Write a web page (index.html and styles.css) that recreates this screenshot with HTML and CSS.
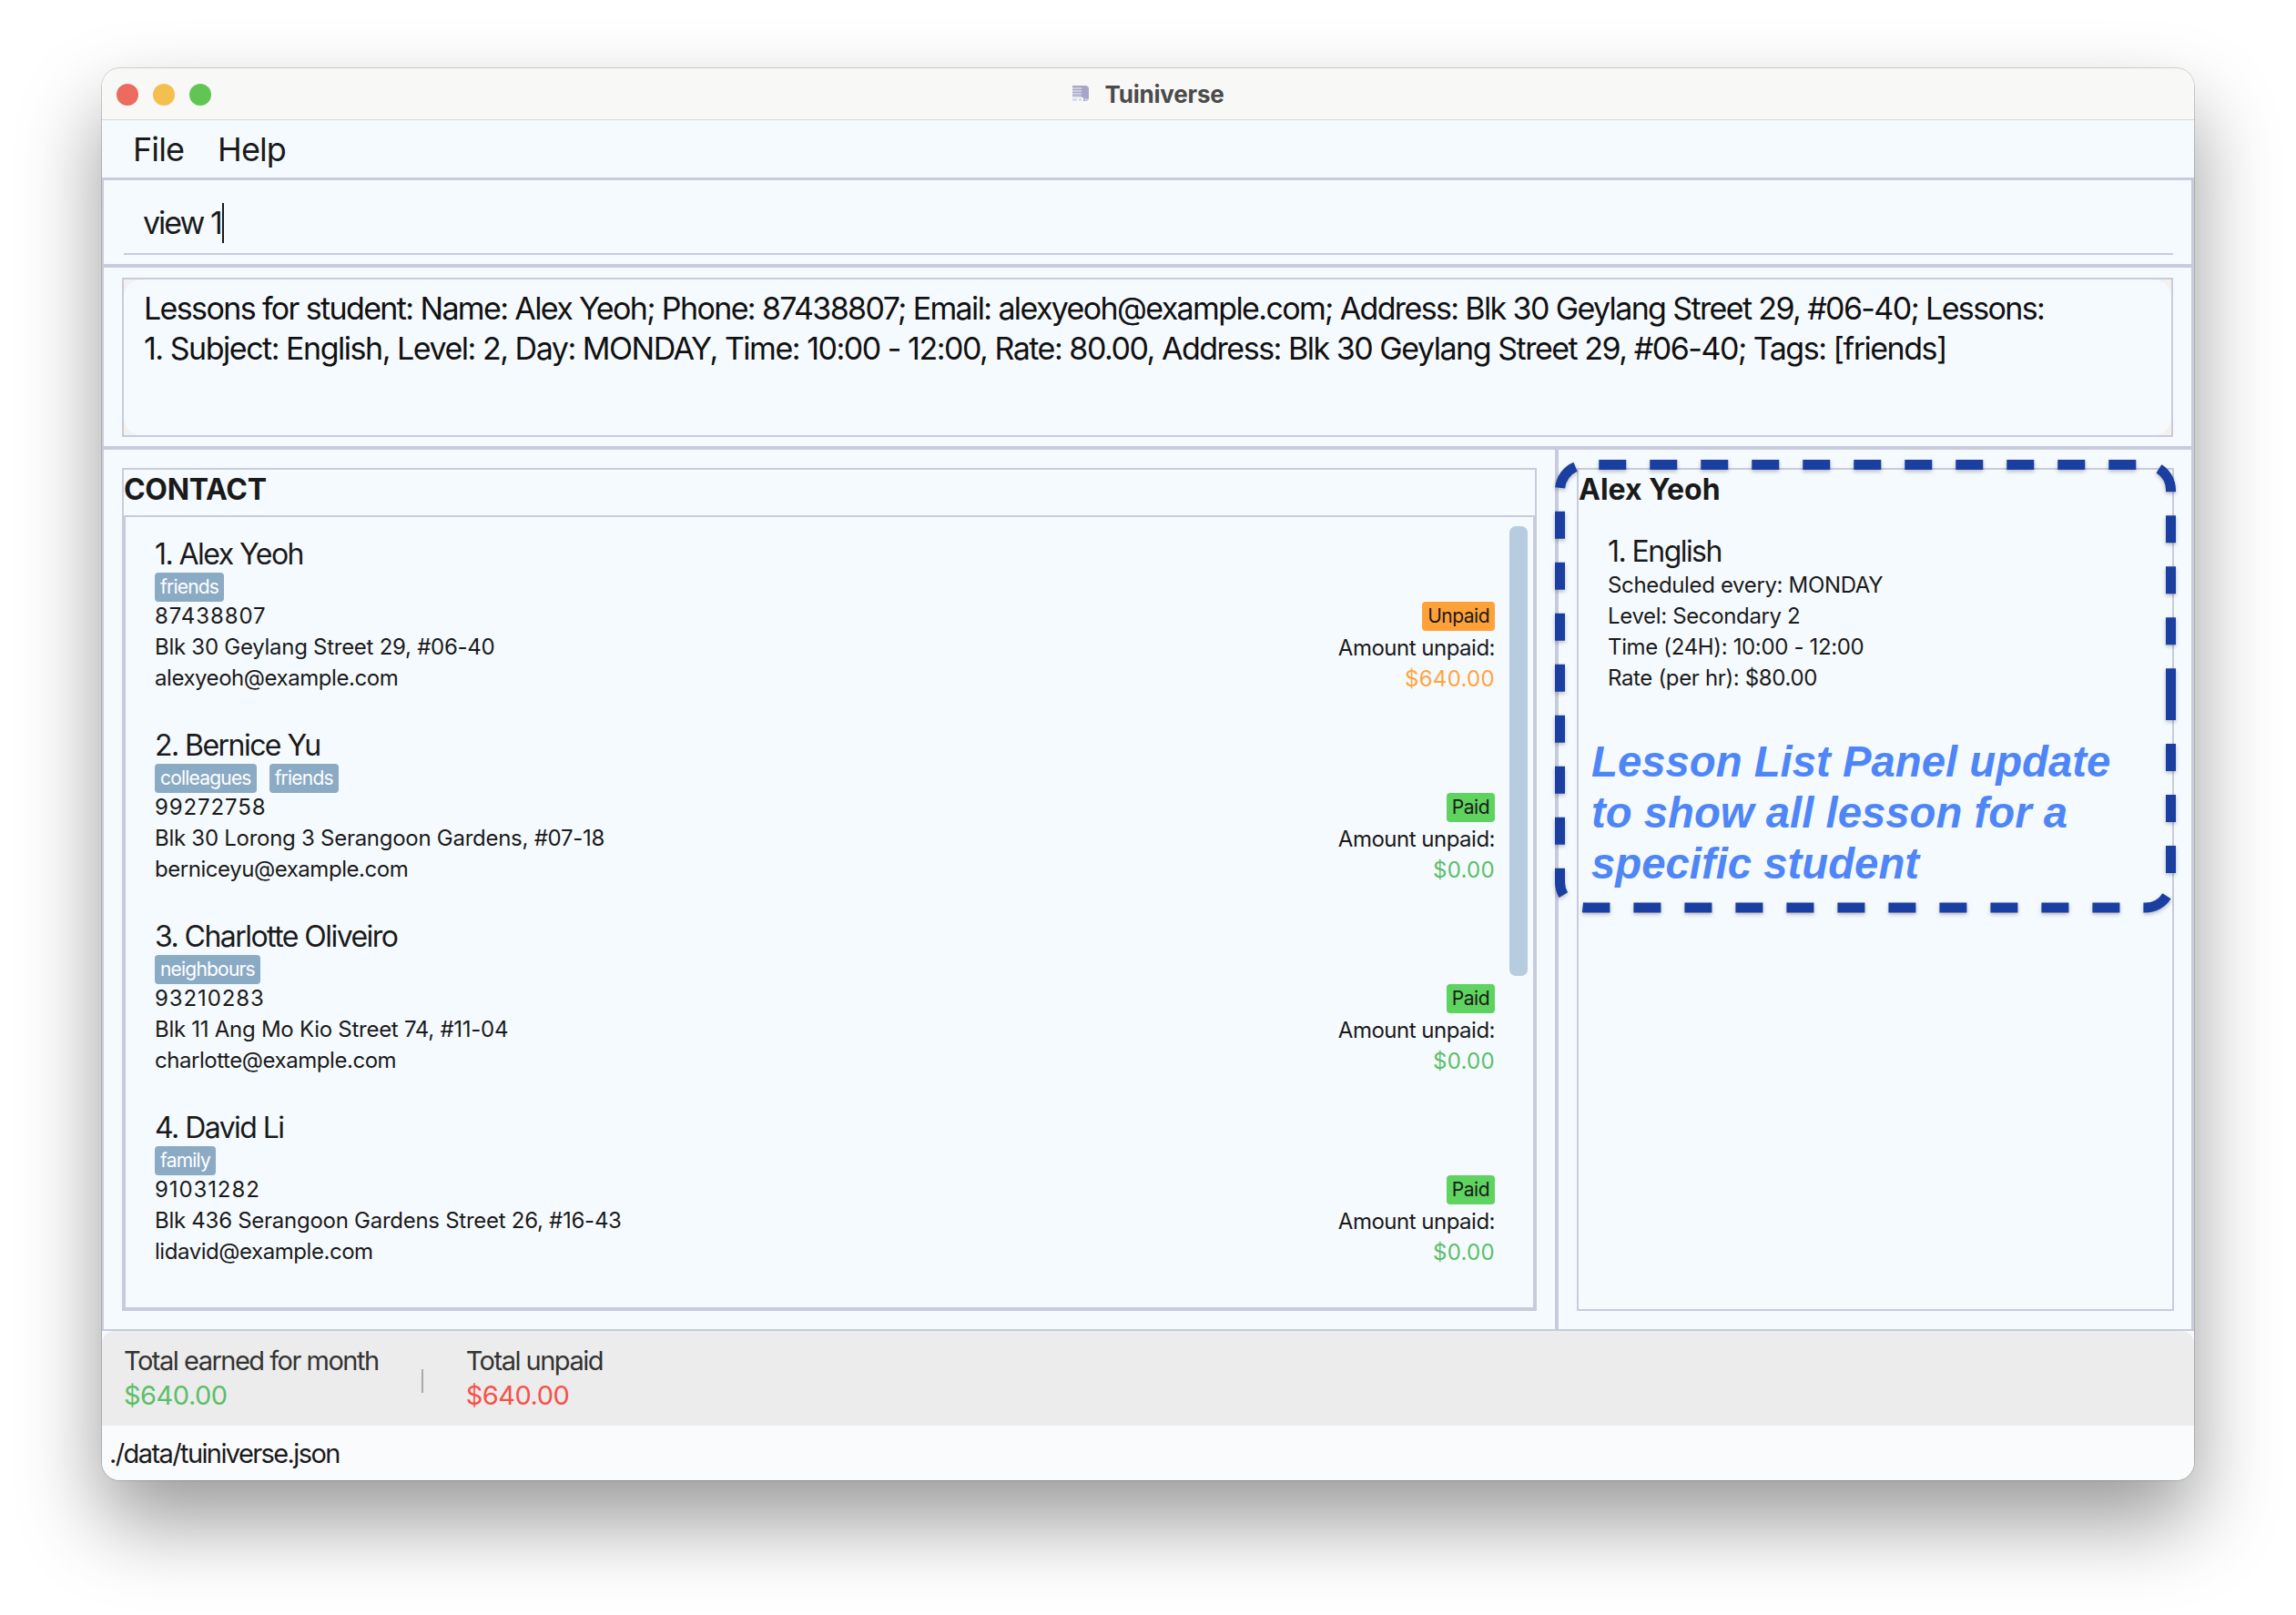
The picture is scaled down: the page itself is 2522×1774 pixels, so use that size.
FILE: index.html
```html
<!DOCTYPE html>
<html lang="en">
<head>
    <meta charset="UTF-8">
    <title>Tuiniverse</title>
    <link rel="stylesheet" href="styles.css">
</head>
<body>

<div class="window">
    <div class="titlebar">
        <div class="lights">
            <span class="light red"></span>
            <span class="light amber"></span>
            <span class="light green"></span>
        </div>
        <svg class="app-icon" width="20" height="20" viewBox="0 0 20 20">
            <path d="M1 1h14a4 4 0 0 1 4 4v9a4 4 0 0 1-4 4h-2v-4H1z" fill="#a8a6c8"/>
            <path d="M1 4h10M1 7h10M1 10h10M1 13h10" stroke="#f4f4f8" stroke-width="1"/>
            <path d="M1 16.5h5M8 16.5h3M14 16.5h4" stroke="#c3d0f2" stroke-width="2"/>
        </svg>
        <span class="app-name">Tuiniverse</span>
    </div>

    <div class="menubar">
        <span class="menu-item">File</span>
        <span class="menu-item">Help</span>
    </div>

    <div class="app-body">
        <div class="command">
            <div class="command-input"><span>view 1</span><span class="caret"></span></div>
        </div>

        <div class="result">
            <div class="result-box">
                <div class="result-text">
                    <p class="result-first">Lessons for student: Name: Alex Yeoh; Phone: 87438807; Email: alexyeoh@example.com; Address: Blk 30 Geylang Street 29, #06-40; Lessons:</p>
                    <p>1. Subject: English, Level: 2, Day: MONDAY, Time: 10:00 - 12:00, Rate: 80.00, Address: Blk 30 Geylang Street 29, #06-40; Tags: [friends]</p>
                </div>
            </div>
        </div>

        <div class="main">
            <div class="contacts-col">
                <div class="contacts">
                    <div class="panel-title">CONTACT</div>
                    <div class="list">
                        <div class="scrollbar"></div>

                        <div class="card">
                            <div class="card-left">
                                <div class="name">1. Alex Yeoh</div>
                                <div class="tags"><span class="tag">friends</span></div>
                                <div class="line phone">87438807</div>
                                <div class="line address">Blk 30 Geylang Street 29, #06-40</div>
                                <div class="line email">alexyeoh@example.com</div>
                            </div>
                            <div class="card-right">
                                <span class="badge unpaid">Unpaid</span>
                                <div class="amount-label">Amount unpaid:</div>
                                <div class="amount orange">$640.00</div>
                            </div>
                        </div>

                        <div class="card">
                            <div class="card-left">
                                <div class="name">2. Bernice Yu</div>
                                <div class="tags"><span class="tag">colleagues</span><span class="tag">friends</span></div>
                                <div class="line phone">99272758</div>
                                <div class="line address">Blk 30 Lorong 3 Serangoon Gardens, #07-18</div>
                                <div class="line email">berniceyu@example.com</div>
                            </div>
                            <div class="card-right">
                                <span class="badge paid">Paid</span>
                                <div class="amount-label">Amount unpaid:</div>
                                <div class="amount lime">$0.00</div>
                            </div>
                        </div>

                        <div class="card">
                            <div class="card-left">
                                <div class="name">3. Charlotte Oliveiro</div>
                                <div class="tags"><span class="tag">neighbours</span></div>
                                <div class="line phone">93210283</div>
                                <div class="line address">Blk 11 Ang Mo Kio Street 74, #11-04</div>
                                <div class="line email">charlotte@example.com</div>
                            </div>
                            <div class="card-right">
                                <span class="badge paid">Paid</span>
                                <div class="amount-label">Amount unpaid:</div>
                                <div class="amount lime">$0.00</div>
                            </div>
                        </div>

                        <div class="card">
                            <div class="card-left">
                                <div class="name">4. David Li</div>
                                <div class="tags"><span class="tag">family</span></div>
                                <div class="line phone">91031282</div>
                                <div class="line address">Blk 436 Serangoon Gardens Street 26, #16-43</div>
                                <div class="line email">lidavid@example.com</div>
                            </div>
                            <div class="card-right">
                                <span class="badge paid">Paid</span>
                                <div class="amount-label">Amount unpaid:</div>
                                <div class="amount lime">$0.00</div>
                            </div>
                        </div>
                    </div>
                </div>
            </div>

            <div class="lessons-col">
                <div class="lessons">
                    <div class="panel-title">Alex Yeoh</div>
                    <div class="lesson">
                        <div class="name">1. English</div>
                        <div class="line">Scheduled every: MONDAY</div>
                        <div class="line">Level: Secondary 2</div>
                        <div class="line">Time (24H): 10:00 - 12:00</div>
                        <div class="line">Rate (per hr): $80.00</div>
                    </div>
                    <div class="note">Lesson List Panel update<br>to show all lesson for a<br>specific student</div>
                </div>
            </div>
        </div>
    </div>

    <div class="status">
        <div class="stat">
            <div class="stat-label">Total earned for month</div>
            <div class="stat-value earned">$640.00</div>
        </div>
        <div class="stat-sep"></div>
        <div class="stat">
            <div class="stat-label">Total unpaid</div>
            <div class="stat-value owing">$640.00</div>
        </div>
    </div>

    <div class="footer">./data/tuiniverse.json</div>
</div>

<!-- annotation drawn over the screenshot -->
<svg class="dashes" width="2522" height="1774" viewBox="0 0 2522 1774">
    <path d="M2384.5 761V969A28 28 0 0 1 2356.5 997H1741.5A28 28 0 0 1 1713.5 969V538.5A28 28 0 0 1 1741.5 510.5H2356.5A28 28 0 0 1 2384.5 538.5V761Z"
          fill="none" stroke="#1a3fa0" stroke-width="11" stroke-dasharray="30 26"/>
</svg>

</body>
</html>
```

FILE: styles.css
```css
* {
    box-sizing: border-box;
}
body {
    margin: 0;
    padding: 75px 112px 0;
    height: 1774px;
    overflow: hidden;
    background-color: #fff;
    font-family: Inter, "Noto Sans", sans-serif;
    color: #1a1a1a;
    position: relative;
}
p {
    margin: 0;
}
.window {
    width: 2298px;
    height: 1551px;
    display: flex;
    flex-direction: column;
    border-radius: 20px;
    overflow: hidden;
    background-color: #f5faff;
    box-shadow: 0 0 0 1px rgba(0, 0, 0, 0.16), 0 45px 90px rgba(0, 0, 0, 0.4);
}

/* title bar */
.titlebar {
    height: 57px;
    flex: none;
    display: flex;
    align-items: center;
    justify-content: center;
    position: relative;
    background-color: #f8f8f6;
    border-bottom: 1px solid #d8d8d8;
}
.lights {
    position: absolute;
    left: 16px;
    top: 17px;
    display: flex;
    gap: 16px;
}
.light {
    width: 24px;
    height: 24px;
    border-radius: 50%;
}
.red { background-color: #ec6a5e; }
.amber { background-color: #f4bf4f; }
.green { background-color: #61c554; }
.app-icon {
    margin-right: 16px;
}
.app-name {
    font-size: 26px;
    font-weight: 700;
    letter-spacing: -0.2px;
    color: #4b4b4b;
}

/* menu */
.menubar {
    height: 66px;
    flex: none;
    display: flex;
    align-items: center;
    gap: 37px;
    padding-left: 34px;
    border-bottom: 3px solid #c8cbdb;
}
.menu-item {
    font-size: 36px;
    letter-spacing: -0.9px;
}

.app-body {
    flex: 1;
    display: flex;
    flex-direction: column;
    min-height: 0;
    border-left: 2px solid #c8cbdb;
    border-right: 3px solid #c8cbdb;
}

/* command box */
.command {
    height: 96px;
    flex: none;
    padding: 0 20px 10px 22px;
    border-bottom: 4px solid #c8cbdb;
}
.command-input {
    height: 82px;
    padding: 25px 0 0 21px;
    display: flex;
    font-size: 34px;
    letter-spacing: -2px;
    line-height: 44px;
    border-bottom: 2px solid #c8cbdb;
}
.caret {
    width: 2px;
    height: 44px;
    background-color: #1a1a1a;
    margin-left: 1px;
}

/* result box */
.result {
    height: 200px;
    flex: none;
    padding: 11px 20px 10px 20px;
    border-bottom: 4px solid #c8cbdb;
}
.result-box {
    height: 175px;
    font-size: 34px;
    line-height: 44px;
    letter-spacing: -1.48px;
    border: 2px solid #c8cbdb;
    background-color: #f3f2f0;
    color: #111;
    white-space: nowrap;
}
.result-text {
    height: 100%;
    padding: 10px 22px;
    border-radius: 20px;
    background-color: #f5faff;
}
.result-first {
    letter-spacing: -1.63px;
}

/* contact list + lesson list */
.main {
    flex: 1;
    display: flex;
    min-height: 0;
    border-bottom: 2px solid #c8cbdb;
}
.contacts-col {
    width: 1598px;
    flex: none;
    padding: 20px;
    border-right: 4px solid #c8cbdb;
}
.contacts {
    height: 100%;
    display: flex;
    flex-direction: column;
    border: 2px solid #c8cbdb;
    border-bottom: none;
}
.panel-title {
    height: 50px;
    font-size: 32px;
    font-weight: 700;
    line-height: 44px;
    letter-spacing: -0.3px;
}
.lessons .panel-title {
    letter-spacing: 0;
}
.list {
    flex: 1;
    position: relative;
    padding: 20px 42px 0 32px;
    margin: 0 -2px;
    border: 4px solid #c8cbdb;
    border-top-width: 2px;
    overflow: hidden;
}
.scrollbar {
    position: absolute;
    right: 6px;
    top: 10px;
    width: 20px;
    height: 494px;
    border-radius: 7px;
    background-color: #b7cddf;
}
.card {
    height: 210px;
    display: flex;
    justify-content: space-between;
}
.name {
    font-size: 32px;
    line-height: 41px;
    letter-spacing: -1.55px;
}
.tags {
    display: flex;
    gap: 14px;
    margin-bottom: -1px;
}
.tag {
    height: 32px;
    padding: 0 6px;
    font-size: 21px;
    line-height: 31px;
    letter-spacing: -0.8px;
    color: #fff;
    background-color: #8babc5;
    border-radius: 4px;
}
.line {
    font-size: 24px;
    line-height: 34px;
    letter-spacing: -0.35px;
}
.phone {
    letter-spacing: 0.9px;
}
.address {
    letter-spacing: -0.27px;
}
.email {
    letter-spacing: -0.45px;
}
.card-right {
    display: flex;
    flex-direction: column;
    align-items: flex-end;
    padding-top: 73px;
}
.badge {
    height: 32px;
    padding: 0 6px;
    font-size: 21px;
    line-height: 32px;
    letter-spacing: -0.5px;
    border-radius: 4px;
}
.unpaid { background-color: #ffa139; }
.paid { background-color: #5fd35f; }
.amount-label {
    margin-top: 2px;
    font-size: 24px;
    line-height: 34px;
    letter-spacing: -0.5px;
}
.amount {
    font-size: 24px;
    line-height: 34px;
    letter-spacing: 0.3px;
}
.orange { color: #ffa53c; }
.lime { color: #5cbf68; }

.lessons-col {
    flex: 1;
    padding: 20px 19px 20px 20px;
}
.lessons {
    height: 100%;
    position: relative;
    border: 2px solid #c8cbdb;
}
.lesson {
    padding: 19px 0 0 32px;
}
.note {
    position: absolute;
    left: 14px;
    top: 293px;
    font-family: "Liberation Sans", Arial, sans-serif;
    font-size: 47.3px;
    font-weight: 700;
    font-style: italic;
    line-height: 56px;
    color: #4f86f7;
}

/* totals */
.status {
    height: 104px;
    flex: none;
    display: flex;
    background-color: #ececec;
    border-radius: 14px 14px 0 0;
    padding-left: 24px;
}
.stat {
    padding-top: 14px;
}
.stat-label {
    font-size: 29px;
    line-height: 38px;
    letter-spacing: -1.5px;
    color: #333;
}
.stat-value {
    font-size: 29px;
    line-height: 38px;
    letter-spacing: -0.5px;
}
.earned { color: #5cbf68; }
.owing { color: #f5524a; }
.stat-sep {
    width: 2px;
    height: 26px;
    margin: 42px 47px 0 47px;
    background-color: #a8a8a8;
}

.footer {
    height: 60px;
    flex: none;
    padding-left: 8px;
    font-size: 29px;
    line-height: 62px;
    letter-spacing: -1.6px;
    background-color: #fafbfd;
}

.dashes {
    position: absolute;
    left: 0;
    top: 0;
    filter: drop-shadow(0 2px 2px rgba(0, 0, 0, 0.25));
}
```
